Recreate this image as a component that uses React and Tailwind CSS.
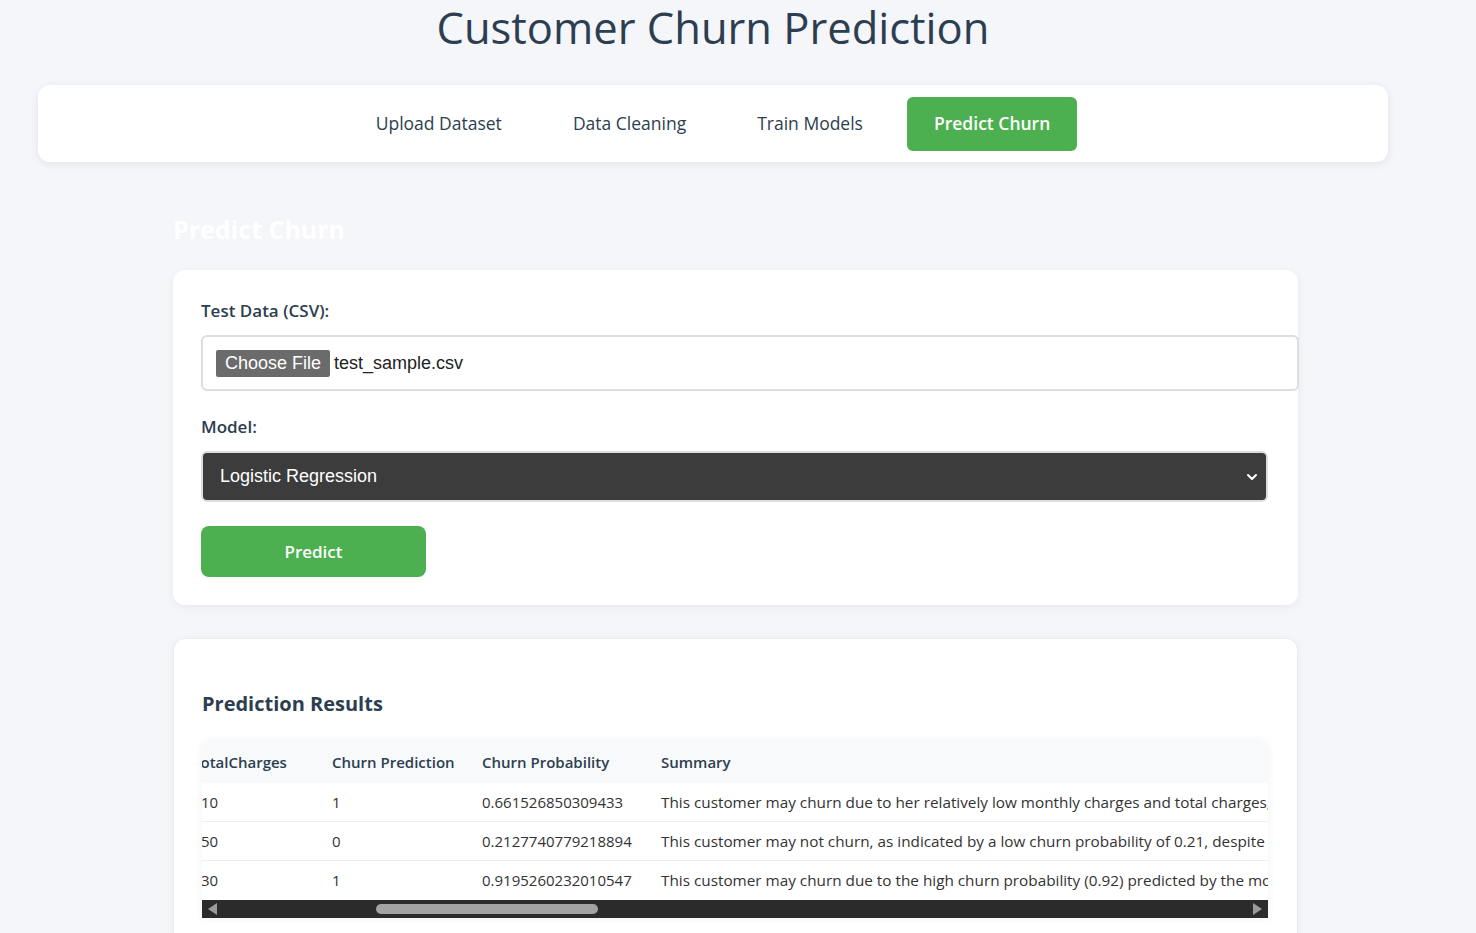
import React from 'react';

const navItems = ['Upload Dataset', 'Data Cleaning', 'Train Models', 'Predict Churn'];

const rows = [
  {
    total: '10',
    pred: '1',
    prob: '0.661526850309433',
    summary:
      'This customer may churn due to her relatively low monthly charges and total charges, along with a short tenure and month-to-month contract.',
  },
  {
    total: '50',
    pred: '0',
    prob: '0.2127740779218894',
    summary:
      'This customer may not churn, as indicated by a low churn probability of 0.21, despite having a month-to-month contract.',
  },
  {
    total: '30',
    pred: '1',
    prob: '0.9195260232010547',
    summary:
      'This customer may churn due to the high churn probability (0.92) predicted by the model and the short tenure.',
  },
];

const App = () => {
  return (
    <div className="min-h-screen bg-[#f5f6fa] font-['Open_Sans',sans-serif] text-[#2c3e50] overflow-hidden">
      {/* Title */}
      <h1 className="pt-[1px] text-center text-[43.5px] leading-[53px] font-medium text-[#2c3e50] pr-[50px]">
        Customer Churn Prediction
      </h1>

      {/* Nav */}
      <nav className="ml-[38px] mt-[31px] w-[1350px] h-[77px] bg-white rounded-xl shadow-[0_2px_10px_rgba(0,0,0,0.08)] flex items-center justify-center gap-[17px]">
        {navItems.map((item) => (
          <button
            key={item}
            className={
              item === 'Predict Churn'
                ? 'h-[54px] px-[27px] rounded-md bg-[#4caf50] text-white text-[17.5px] font-semibold'
                : 'h-[54px] px-[27px] rounded-md text-[#2c3e50] text-[17.5px] font-medium'
            }
          >
            {item}
          </button>
        ))}
      </nav>

      {/* Section heading */}
      <h2 className="ml-[173px] mt-[49px] text-[25px] leading-[36px] font-bold text-white">Predict Churn</h2>

      {/* Form card */}
      <div className="ml-[173px] mt-[23px] w-[1125px] bg-white rounded-xl shadow-[0_2px_10px_rgba(0,0,0,0.06)] pt-[29px] pb-[28px] px-[28px]">
        <label className="block text-[17px] leading-[24px] font-semibold text-[#2c3e50]">Test Data (CSV):</label>
        <div className="mt-[12px] w-[1098px] h-[56px] border-2 border-[#dedede] rounded-md flex items-center pl-[13px] font-['Liberation_Sans',sans-serif] text-[18px]">
          <span className="h-[27px] px-[9px] flex items-center bg-[#6b6b6b] text-white rounded-[2px]">Choose File</span>
          <span className="ml-[4px] text-[#222]">test_sample.csv</span>
        </div>

        <label className="block mt-[24px] text-[17px] leading-[24px] font-semibold text-[#2c3e50]">Model:</label>
        <div className="mt-[12px] w-[1067px] h-[51px] border-2 border-[#dedede] rounded-md bg-[#3c3c3c] flex items-center justify-between pl-[17px] pr-[8px] font-['Liberation_Sans',sans-serif] text-[18px] text-white">
          <span>Logistic Regression</span>
          <svg width="12" height="12" viewBox="0 0 12 12" fill="none">
            <path d="M2 4l4 4 4-4" stroke="white" strokeWidth="2" strokeLinecap="round" strokeLinejoin="round" />
          </svg>
        </div>

        <button className="mt-[24px] w-[225px] h-[51px] rounded-lg bg-[#4caf50] text-white text-[17px] font-semibold">
          Predict
        </button>
      </div>

      {/* Results card */}
      <div className="ml-[173px] mt-[33px] w-[1125px] bg-white rounded-xl border border-[#ececec] shadow-[0_2px_10px_rgba(0,0,0,0.05)] pt-[51px] px-[28px] pb-[40px]">
        <h3 className="text-[20px] leading-[28px] font-bold text-[#2c3e50]">Prediction Results</h3>

        <div className="mt-[23px] w-[1066px] rounded-t-lg shadow-[0_0_8px_rgba(0,0,0,0.06)] overflow-hidden">
          <div className="ml-[-25px] w-[1400px]">
            <div className="grid grid-cols-[140px_150px_179px_931px] h-[42px] items-center bg-[#f8f9fa] text-[15px] font-semibold text-[#2c3e50] whitespace-nowrap">
              <div className="pl-[15px]">TotalCharges</div>
              <div className="pl-[15px]">Churn Prediction</div>
              <div className="pl-[15px]">Churn Probability</div>
              <div className="pl-[15px]">Summary</div>
            </div>
            {rows.map((r, i) => (
              <div
                key={i}
                className={
                  'grid grid-cols-[140px_150px_179px_931px] h-[39px] items-center text-[15px] text-[#333] whitespace-nowrap ' +
                  (i < rows.length - 1 ? 'border-b border-[#eeeeee]' : '')
                }
              >
                <div className="pl-[15px]">
                  <span className="inline-block w-[9px]" />
                  {r.total}
                </div>
                <div className="pl-[15px]">{r.pred}</div>
                <div className="pl-[15px]">{r.prob}</div>
                <div className="pl-[15px] overflow-hidden text-[15.3px]">{r.summary}</div>
              </div>
            ))}
          </div>
          {/* horizontal scrollbar */}
          <div className="h-[18px] bg-[#2b2b2b] flex items-center justify-between px-[6px]">
            <div className="w-0 h-0 border-y-[6px] border-y-transparent border-r-[9px] border-r-[#9a9a9a]" />
            <div className="flex-1 relative h-full">
              <div className="absolute top-[4px] left-[159px] w-[222px] h-[10px] rounded-full bg-[#a3a3a3]" />
            </div>
            <div className="w-0 h-0 border-y-[6px] border-y-transparent border-l-[9px] border-l-[#9a9a9a]" />
          </div>
        </div>
      </div>
    </div>
  );
};

export default App;
